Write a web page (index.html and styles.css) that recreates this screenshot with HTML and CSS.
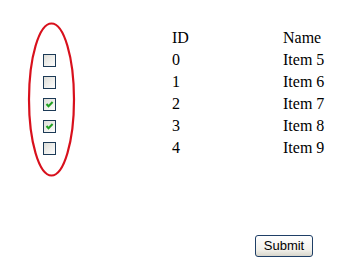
FILE: index.html
```html
<!DOCTYPE html>
<html>
<head>
<meta charset="utf-8">
<link rel="stylesheet" href="styles.css">
</head>
<body>
<form class="page">
  <div class="grid">
    <div class="cell"></div><div class="cell">ID</div><div class="cell">Name</div>
    <div class="cell"><svg class="cb" width="13" height="13" viewBox="0 0 13 13"><defs><linearGradient id="g" x1="0" y1="0" x2="1" y2="1"><stop offset="0" stop-color="#dcdcd6"/><stop offset="1" stop-color="#ffffff"/></linearGradient></defs><rect x="0.5" y="0.5" width="12" height="12" fill="url(#g)" stroke="#1c3a56"/></svg></div><div class="cell">0</div><div class="cell">Item 5</div>
    <div class="cell"><svg class="cb" width="13" height="13" viewBox="0 0 13 13"><rect x="0.5" y="0.5" width="12" height="12" fill="url(#g)" stroke="#1c3a56"/></svg></div><div class="cell">1</div><div class="cell">Item 6</div>
    <div class="cell"><svg class="cb" width="13" height="13" viewBox="0 0 13 13"><rect x="0.5" y="0.5" width="12" height="12" fill="url(#g)" stroke="#1c3a56"/><path d="M3.5 6 L5.5 8.2 L9.6 4" fill="none" stroke="#21a121" stroke-width="2"/></svg></div><div class="cell">2</div><div class="cell">Item 7</div>
    <div class="cell"><svg class="cb" width="13" height="13" viewBox="0 0 13 13"><rect x="0.5" y="0.5" width="12" height="12" fill="url(#g)" stroke="#1c3a56"/><path d="M3.5 6 L5.5 8.2 L9.6 4" fill="none" stroke="#21a121" stroke-width="2"/></svg></div><div class="cell">3</div><div class="cell">Item 8</div>
    <div class="cell"><svg class="cb" width="13" height="13" viewBox="0 0 13 13"><rect x="0.5" y="0.5" width="12" height="12" fill="url(#g)" stroke="#1c3a56"/></svg></div><div class="cell">4</div><div class="cell">Item 9</div>
  </div>
  <div class="actions"><button type="button" class="submit">Submit</button></div>
  <svg class="ring" width="49" height="157" viewBox="0 0 49 157"><ellipse cx="24.5" cy="78.5" rx="22.5" ry="76" fill="none" stroke="#d8101c" stroke-width="2.2"/></svg>
</form>
</body>
</html>
```
FILE: styles.css
```css
html, body {
  margin: 0;
  padding: 0;
  background: #ffffff;
}
.page {
  position: relative;
  width: 363px;
  height: 266px;
  margin: 0;
  padding: 27px 0 0 43px;
  box-sizing: border-box;
  font-family: "Liberation Serif", "Times New Roman", serif;
  font-size: 16px;
  color: #000;
}
.grid {
  display: grid;
  grid-template-columns: 129px 111px auto;
  grid-auto-rows: 22px;
}
.cell {
  display: flex;
  align-items: center;
  line-height: 18px;
}
.cb {
  display: block;
}
.actions {
  padding: 76px 0 0 212px;
}
.submit {
  width: 58px;
  height: 22px;
  padding: 0;
  border: 1px solid #1f3f66;
  border-radius: 3px;
  background: linear-gradient(#ffffff, #f1f0ea 70%, #d8d6cc);
  font-family: "Liberation Sans", Arial, sans-serif;
  font-size: 13px;
  color: #000;
  line-height: 20px;
}
.ring {
  position: absolute;
  left: 27px;
  top: 21px;
}
```
